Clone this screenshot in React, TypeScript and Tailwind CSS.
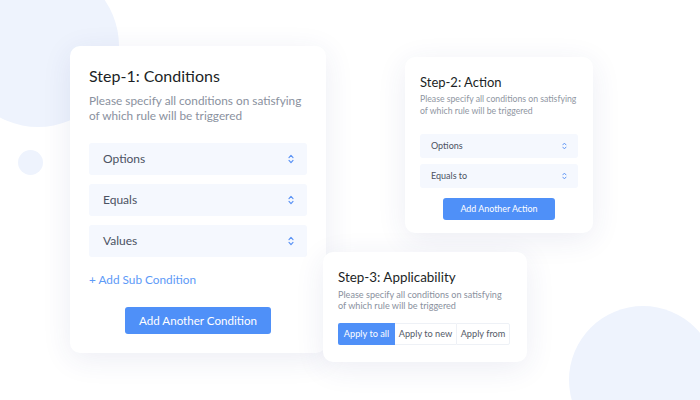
const font = "font-['Lato','Liberation_Sans',sans-serif]";

function UpDown({ size = 10 }: { size?: number }) {
  return (
    <svg width={size * 0.6} height={size} viewBox="0 0 6 10" fill="none">
      <path d="M1 3.6 L3 1.4 L5 3.6" stroke="#5b93f5" strokeWidth="1.2" strokeLinecap="round" strokeLinejoin="round" />
      <path d="M1 6.4 L3 8.6 L5 6.4" stroke="#5b93f5" strokeWidth="1.2" strokeLinecap="round" strokeLinejoin="round" />
    </svg>
  );
}

function Select({ label, big }: { label: string; big?: boolean }) {
  return big ? (
    <div className="flex h-8 items-center justify-between rounded-[3px] bg-[#f5f8fe] pl-[14px] pr-[13px] text-[12px] text-[#4b5262]">
      <span>{label}</span>
      <UpDown size={10} />
    </div>
  ) : (
    <div className="flex h-6 items-center justify-between rounded-[3px] bg-[#f5f8fe] pl-[11px] pr-[11px] text-[9px] text-[#4b5262]">
      <span>{label}</span>
      <UpDown size={8} />
    </div>
  );
}

export default function App() {
  return (
    <div className={`relative h-[400px] w-[700px] overflow-hidden bg-white ${font}`}>
      {/* background shapes */}
      <div className="absolute left-[-43px] top-[-35px] h-[162px] w-[162px] rounded-full bg-[#eef3fd]" />
      <div className="absolute left-[18px] top-[150px] h-[25px] w-[25px] rounded-full bg-[#eef3fd]" />
      <div className="absolute left-[569px] top-[306px] h-[148px] w-[148px] rounded-full bg-[#eef3fd]" />

      {/* Step 1 */}
      <div className="absolute left-[70px] top-[46px] flex h-[307px] w-[256px] flex-col rounded-[10px] bg-white px-[19px] pt-[20px] shadow-[0_6px_30px_rgba(40,60,130,0.09)]">
        <h2 className="text-[16px] leading-[20px] text-[#1c1f26]">Step-1: Conditions</h2>
        <p className="mt-[7px] text-[11.8px] leading-[15px] text-[#8a919e]">
          Please specify all conditions on satisfying
          <br />
          of which rule will be triggered
        </p>
        <div className="mt-[20px] flex flex-col gap-[9px]">
          <Select label="Options" big />
          <Select label="Equals" big />
          <Select label="Values" big />
        </div>
        <div className="mt-[15px] text-[11.8px] leading-[16px] text-[#5d9af7]">+ Add Sub Condition</div>
        <div className="mt-[19px] flex justify-center">
          <button className="h-[27px] w-[146px] rounded-[3px] bg-[#4f90f8] text-[11.6px] text-white">
            Add Another Condition
          </button>
        </div>
      </div>

      {/* Step 2 */}
      <div className="absolute left-[405px] top-[57px] flex h-[176px] w-[188px] flex-col rounded-[10px] bg-white px-[15px] pt-[16px] shadow-[0_6px_30px_rgba(40,60,130,0.09)]">
        <h2 className="text-[13px] leading-[18px] text-[#1c1f26]">Step-2: Action</h2>
        <p className="mt-[2px] text-[8.7px] leading-[11.5px] text-[#8f96a2]">
          Please specify all conditions on satisfying
          <br />
          of which rule will be triggered
        </p>
        <div className="mt-[18px] flex flex-col gap-[6px]">
          <Select label="Options" />
          <Select label="Equals to" />
        </div>
        <div className="mt-[10px] flex justify-center">
          <button className="h-[22px] w-[112px] rounded-[3px] bg-[#4f90f8] text-[8.9px] text-white">
            Add Another Action
          </button>
        </div>
      </div>

      {/* Step 3 */}
      <div className="absolute left-[323px] top-[252px] flex h-[110px] w-[204px] flex-col rounded-[10px] bg-white px-[15px] pt-[16px] shadow-[0_6px_30px_rgba(40,60,130,0.09)]">
        <h2 className="text-[13.4px] leading-[18px] text-[#1c1f26]">Step-3: Applicability</h2>
        <p className="mt-[3px] text-[9.1px] leading-[11px] text-[#8a919e]">
          Please specify all conditions on satisfying
          <br />
          of which rule will be triggered
        </p>
        <div className="mt-[12px] flex h-[22px] w-[172px] text-[9.2px]">
          <div className="flex w-[57px] items-center justify-center rounded-l-[2px] bg-[#4f90f8] text-white">Apply to all</div>
          <div className="flex w-[61px] items-center justify-center border-y border-[#eef1f6] text-[#555c69]">Apply to new</div>
          <div className="flex w-[54px] items-center justify-center rounded-r-[2px] border border-[#eef1f6] text-[#555c69]">Apply from</div>
        </div>
      </div>
    </div>
  );
}
